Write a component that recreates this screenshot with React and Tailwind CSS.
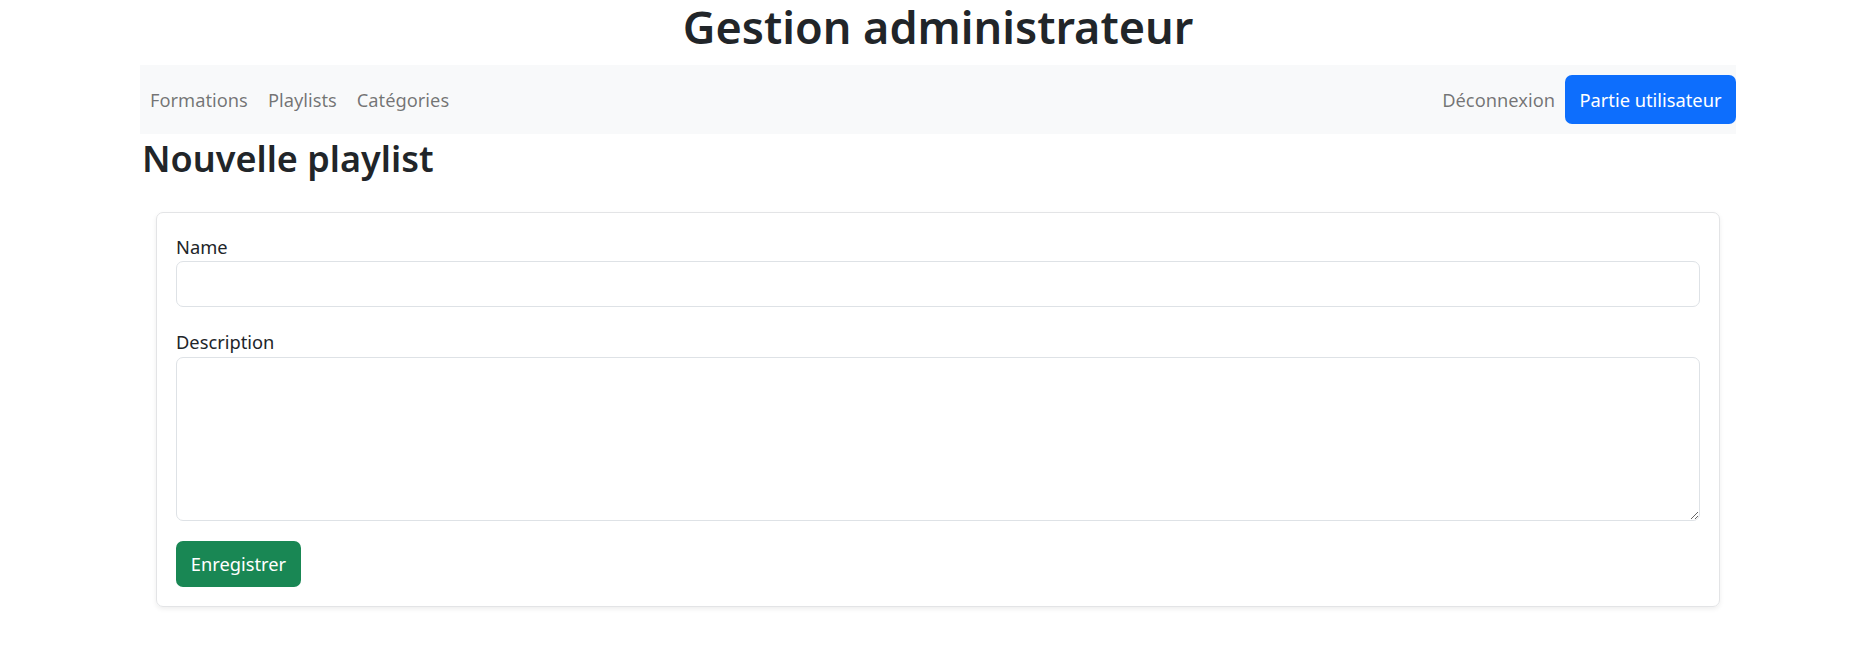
import React from "react";

const font = { fontFamily: '"Noto Sans", "Open Sans", sans-serif' };

const links = ["Formations", "Playlists", "Catégories"];

export default function App() {
  return (
    <div className="min-h-[645px] bg-white text-[#212529]" style={font}>
      <div className="ml-[140px] w-[1596px]">
        {/* ── Title ───────────────────────────────────── */}
        <h1 className="h-[65px] text-center text-[45px] font-semibold leading-[54px]">
          Gestion administrateur
        </h1>

        {/* ── Navbar ──────────────────────────────────── */}
        <nav className="flex h-[69px] items-center justify-between bg-[#f8f9fa]">
          <div className="flex items-center">
            {links.map((l) => (
              <a key={l} href="#" className="px-[10px] text-[18.3px] text-[rgba(0,0,0,0.55)]">
                {l}
              </a>
            ))}
          </div>
          <div className="flex items-center">
            <a href="#" className="px-[10px] text-[18.3px] text-[rgba(0,0,0,0.55)]">
              Déconnexion
            </a>
            <button className="h-[49px] w-[171px] rounded-[7px] bg-[#0d6efd] text-[18.3px] text-white">
              Partie utilisateur
            </button>
          </div>
        </nav>

        {/* ── Heading ─────────────────────────────────── */}
        <h2 className="h-[78px] pl-[2px] text-[36px] font-semibold leading-[50px]">
          Nouvelle playlist
        </h2>

        {/* ── Form card ───────────────────────────────── */}
        <div className="mx-[16px] rounded-[7px] border border-[#e3e4e6] p-[19px] shadow-[0_2px_5px_rgba(0,0,0,0.07)]">
          <form className="flex flex-col">
            <label className="block h-[29px] text-[18.3px] leading-[29px]">Name</label>
            <input
              type="text"
              className="h-[46px] w-full rounded-[7px] border border-[#dee2e6] px-[15px] text-[18.3px] outline-none"
            />
            <label className="mt-[20px] block h-[30px] text-[18.3px] leading-[30px]">Description</label>
            <textarea className="h-[164px] w-full rounded-[7px] border border-[#dee2e6] px-[15px] py-[7px] text-[18.3px] outline-none" />
            <div className="mt-[20px]">
              <button
                type="button"
                className="h-[46px] w-[125px] rounded-[7px] bg-[#198754] text-[18.3px] text-white"
              >
                Enregistrer
              </button>
            </div>
          </form>
        </div>
      </div>
    </div>
  );
}
